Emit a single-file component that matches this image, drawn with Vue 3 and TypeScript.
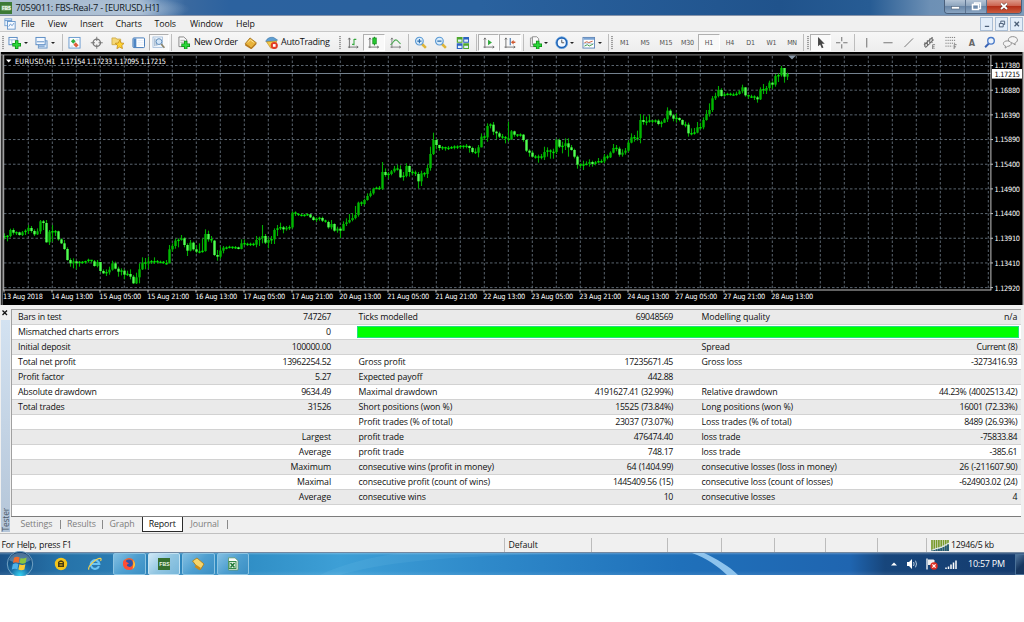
<script setup lang="ts">
type Bar = [number, number, number]
interface Segment { base: number; bars: Bar[] }
interface Tool { id: string; w: number; kind?: 'sep' | 'grip' | 'text' | 'label' | 'drop'; on?: boolean }

// Bars are [close, high, low] in thirds of a pixel below the segment's base line.
const segments: Segment[] = [
  { base: 200, bars: [
    [112,100,118],[108,105,124],[90,86,112],[98,85,104],[97,94,105],[105,95,107],[97,93,108],[93,88,105],[84,75,102],[93,78,98],
    [103,88,108],[94,85,105],[64,60,102],[69,60,90],[127,60,128],[95,90,135],[94,75,125],[94,90,108],[118,92,122],[130,115,132],
    [147,120,150],[180,142,182],[190,175,200],[184,175,205],[190,183,208],[186,183,200],[188,183,192],[184,182,191],[180,176,188],[184,180,188],
    [198,180,200],[186,180,202],[213,186,216],[220,208,222],[217,208,228],[209,200,224],[190,182,212],[206,185,208],[215,200,230],[212,205,226],
    [224,208,238],[222,212,228],[230,208,238],[250,225,252],[232,218,252],[208,190,250],[188,172,210],[190,174,208],[184,170,206],[188,180,192],
    [184,172,192],[186,180,190],[186,182,190],[190,183,192],[190,180,194],[148,135,190],[138,130,155],[122,116,146],[120,115,142],[115,105,122],
    [135,112,142],[152,130,168],[128,120,154],[148,125,152],[155,135,160],[155,130,160],[153,115,158],[102,88,155],[118,92,125],[122,108,128],
    [165,120,168],[170,150,182],[152,140,176],[143,138,160],[145,139,148],[141,137,145],[144,139,147],[142,138,147],[147,140,148],[130,118,148],
    [132,118,136],[135,128,138],[132,128,138],[134,128,138],[120,108,142],[115,110,138]] },
  { base: 150, bars: [
    [258,225,280],[278,252,282],[270,262,295],[268,258,282],[240,235,282],[236,225,258],[232,218,240],[238,228,250],[233,228,242],[232,226,240],
    [188,184,236],[192,184,198],[195,190,198],[195,191,199],[197,192,200],[193,190,198],[202,192,204],[210,198,212],[207,202,216],[204,200,212],
    [212,200,216],[216,209,218],[232,212,236],[222,210,238],[242,220,245],[236,230,248],[242,230,264],[222,214,242],[217,205,228],[210,192,220],
    [204,190,214],[195,168,208],[158,155,200],[162,154,168],[150,146,166],[138,130,152],[130,122,142],[116,113,134],[114,110,118],[116,108,120],
    [66,36,120],[75,55,80],[72,66,86],[64,60,76],[56,48,68],[58,44,62],[82,46,84],[78,66,92],[48,40,82],[66,46,80],
    [68,60,75],[72,62,78],[94,66,116],[70,62,108],[72,66,80],[54,44,84],[12,-10,62],[-30,-52,15],[-15,-34,-2],[-6,-16,2],
    [-8,-12,0],[-4,-10,2],[-6,-12,0],[-8,-12,-3],[-10,-14,-2],[-8,-14,-3],[-12,-15,-4],[-9,-14,-4],[-12,-18,-5],[-6,-14,8],
    [6,-10,10],[8,-5,12],[-8,-15,22]] },
  { base: 90, bars: [
    [140,130,172],[142,135,150],[108,100,155],[104,100,115],[125,96,135],[130,122,148],[140,125,144],[142,132,148],[146,138,160],[148,95,155],
    [124,120,150],[134,122,140],[138,132,141],[134,130,140],[150,132,155],[182,148,186],[188,178,200],[200,182,202],[202,195,206],[200,194,218],
    [202,192,208],[186,170,210],[182,172,200],[186,178,206],[186,176,206],[150,146,192],[170,146,174],[168,155,190],[160,145,180],[172,145,200],
    [180,165,182],[200,176,205],[224,196,236],[228,220,234],[224,212,240],[222,214,226],[216,208,230],[222,212,230],[218,213,226],[214,204,220],
    [214,208,219],[200,192,220],[202,194,208],[188,184,204],[174,162,190],[176,165,184],[194,170,200],[188,178,200],[182,174,194],[158,150,186],
    [142,130,160],[146,135,155],[144,122,152],[90,72,160],[96,75,104],[95,80,106],[92,74,98],[96,90,100],[92,88,98],[102,88,106],
    [98,92,112],[88,84,98],[62,52,96],[76,58,80],[86,72,94],[84,70,98],[90,82,94],[104,88,106],[104,95,112],[130,98,140],
    [130,115,136],[128,114,134],[112,96,130],[112,98,118],[90,82,118],[72,60,92],[60,40,80],[25,18,66],[18,8,30],[0,-12,22],
    [18,-5,20],[14,8,20],[12,8,16],[14,8,17],[14,8,17],[12,5,17],[4,0,14]] },
  { base: 50, bars: [
    [112,104,130],[136,112,140],[140,134,146],[140,134,144],[142,136,150],[148,138,158],[118,112,150],[122,102,132],[114,108,132],[98,92,122],
    [104,94,116],[78,72,110],[76,70,96],[54,48,80],[80,54,98],[72,68,90]] },
]

const bars = segments.flatMap(s => s.bars.map(b => b.map(v => s.base + v / 3)))
const candles = bars.map(([c, h, l], i) => {
  const o = i ? bars[i - 1][0] : c - 1
  const top = Math.min(o, c)
  const size = Math.abs(c - o)
  return {
    x: 4.5 + i * 3,
    h: Math.min(h, top), l: Math.max(l, top + size),
    y: size < 1.4 ? top - 0.3 : top,
    size: Math.max(size, 1.4),
    cls: size < 1.4 ? 'flat' : c > o ? 'bear' : 'bull',
  }
})

const dates = ['13 Aug 2018', '14 Aug 13:00', '15 Aug 05:00', '15 Aug 21:00', '16 Aug 13:00', '17 Aug 05:00', '17 Aug 21:00', '20 Aug 13:00',
  '21 Aug 05:00', '21 Aug 21:00', '22 Aug 13:00', '23 Aug 05:00', '23 Aug 21:00', '24 Aug 13:00', '27 Aug 05:00', '27 Aug 21:00', '28 Aug 13:00']
const prices = ['1.17380', '1.16880', '1.16390', '1.15890', '1.15400', '1.14900', '1.14400', '1.13910', '1.13410', '1.12920']
const priceY = (i: number) => 65.5 + i * 24.68

const menu = [['File', 27], ['View', 32], ['Insert', 35.5], ['Charts', 39], ['Tools', 35.5], ['Window', 46], ['Help', 30]] as [string, number][]

const tools: Tool[] = [
  { id: '', w: 6, kind: 'grip' }, { id: 'newchart', w: 24, kind: 'drop' }, { id: 'profiles', w: 30, kind: 'drop' }, { id: '', w: 4, kind: 'sep' },
  { id: 'market', w: 22 }, { id: 'target', w: 21 }, { id: 'folder', w: 21 }, { id: 'terminal', w: 21 }, { id: 'tester', w: 20, on: true },
  { id: '', w: 5, kind: 'sep' }, { id: 'order', w: 20 }, { id: 'New Order', w: 46, kind: 'text' }, { id: 'book', w: 22 }, { id: 'auto', w: 19 },
  { id: 'AutoTrading', w: 56, kind: 'text' }, { id: '', w: 6, kind: 'grip' },
  { id: 'bars', w: 20 }, { id: 'candle', w: 22, on: true }, { id: 'line', w: 21 }, { id: '', w: 5, kind: 'sep' },
  { id: 'zoomin', w: 19 }, { id: 'zoomout', w: 22 }, { id: 'tile', w: 22 }, { id: '', w: 4, kind: 'sep' },
  { id: 'scroll', w: 21, on: true }, { id: 'shift', w: 22, on: true }, { id: '', w: 5, kind: 'sep' },
  { id: 'indicator', w: 25, kind: 'drop' }, { id: 'clock', w: 27, kind: 'drop' }, { id: 'template', w: 28, kind: 'drop' },
  { id: '', w: 4, kind: 'sep' }, { id: '', w: 4, kind: 'grip' },
  { id: 'M1', w: 21, kind: 'label' }, { id: 'M5', w: 20, kind: 'label' }, { id: 'M15', w: 22, kind: 'label' }, { id: 'M30', w: 21, kind: 'label' },
  { id: 'H1', w: 22, kind: 'label', on: true }, { id: 'H4', w: 20, kind: 'label' }, { id: 'D1', w: 21, kind: 'label' }, { id: 'W1', w: 21, kind: 'label' },
  { id: 'MN', w: 20, kind: 'label' }, { id: '', w: 3, kind: 'sep' }, { id: '', w: 5, kind: 'grip' },
  { id: 'cursor', w: 21, on: true }, { id: 'cross', w: 21 }, { id: '', w: 5, kind: 'sep' },
  { id: 'vline', w: 20 }, { id: 'hline', w: 21 }, { id: 'trend', w: 22 }, { id: 'channel', w: 20 }, { id: 'fib', w: 21 },
  { id: 'letter', w: 22 }, { id: 'search', w: 13 }, { id: 'chat', w: 28 },
]

const rows: string[][] = [
  ['Bars in test', '747267', 'Ticks modelled', '69048569', 'Modelling quality', 'n/a'],
  ['Mismatched charts errors', '0', '', '', '', ''],
  ['Initial deposit', '100000.00', '', '', 'Spread', 'Current (8)'],
  ['Total net profit', '13962254.52', 'Gross profit', '17235671.45', 'Gross loss', '-3273416.93'],
  ['Profit factor', '5.27', 'Expected payoff', '442.88', '', ''],
  ['Absolute drawdown', '9634.49', 'Maximal drawdown', '4191627.41 (32.99%)', 'Relative drawdown', '44.23% (4002513.42)'],
  ['Total trades', '31526', 'Short positions (won %)', '15525 (73.84%)', 'Long positions (won %)', '16001 (72.33%)'],
  ['', '', 'Profit trades (% of total)', '23037 (73.07%)', 'Loss trades (% of total)', '8489 (26.93%)'],
  ['', 'Largest', 'profit trade', '476474.40', 'loss trade', '-75833.84'],
  ['', 'Average', 'profit trade', '748.17', 'loss trade', '-385.61'],
  ['', 'Maximum', 'consecutive wins (profit in money)', '64 (1404.99)', 'consecutive losses (loss in money)', '26 (-211607.90)'],
  ['', 'Maximal', 'consecutive profit (count of wins)', '1445409.56 (15)', 'consecutive loss (count of losses)', '-624903.02 (24)'],
  ['', 'Average', 'consecutive wins', '10', 'consecutive losses', '4'],
]
const isNumber = (s: string) => /\d/.test(s)
</script>

<template>
  <svg class="defs" width="0" height="0">
    <defs>
      <symbol id="newchart" viewBox="0 0 14 14">
        <rect x="1" y="1.5" width="8.5" height="7.5" fill="#fff" stroke="#5b8cc4" /><path d="M1 4h8M4 4v5" stroke="#8bb0da" stroke-width=".8" />
        <path d="M9 4.5v9M4.5 9h9" stroke="#0a8a12" stroke-width="3.6" /><path d="M9 5.3v7.4M5.3 9h7.4" stroke="#2bd93a" stroke-width="2" />
      </symbol>
      <symbol id="profiles" viewBox="0 0 14 14">
        <rect x="3.5" y="5" width="9" height="7.5" fill="#dbe9f8" stroke="#6d98c8" /><rect x="1" y="1.5" width="9.5" height="7.5" fill="#f4f9ff" stroke="#5b8cc4" />
        <path d="M2 6h7.5M4 10.5h6" stroke="#5b8cc4" />
      </symbol>
      <symbol id="market" viewBox="0 0 14 14">
        <rect x="1" y="1.5" width="11.5" height="11" fill="#fbfdff" stroke="#6a9bd0" /><path d="M3 5.5 5.5 3 8 5.5 5.5 8z" fill="#2fae3e" /><path d="M5.5 9 8 6.5 11 9.5 8.5 12z" fill="#e0603a" />
        <path d="M8 4h3M2.7 10.5h2.5" stroke="#bccfe6" stroke-width=".8" />
      </symbol>
      <symbol id="target" viewBox="0 0 14 14">
        <circle cx="7" cy="7" r="3.8" fill="none" stroke="#777" stroke-width="1.4" /><path d="M7 .8v4.4M7 8.8v4.4M.8 7h4.4M8.8 7h4.4" stroke="#777" />
      </symbol>
      <symbol id="folder" viewBox="0 0 14 14">
        <path d="M1 2h4l1 1.2h4V9H1z" fill="#f5d878" stroke="#c9a23c" stroke-width=".8" />
        <path d="M9 4.2l1.4 3 3.2.4-2.4 2.2.7 3.3L9 11.5l-2.9 1.6.7-3.3-2.4-2.2 3.2-.4z" fill="#ffd332" stroke="#c08a18" stroke-width=".8" />
      </symbol>
      <symbol id="terminal" viewBox="0 0 14 14">
        <rect x="1" y="2" width="12" height="10" rx="1" fill="#fff" stroke="#3f78b8" /><path d="M1.5 2.5h3v9h-3z" fill="#4f86c4" /><path d="M6 4.8h6M6 7h6M6 9.2h6" stroke="#d7e4f4" stroke-width=".7" />
      </symbol>
      <symbol id="tester" viewBox="0 0 14 14">
        <rect x="1" y="1" width="10" height="11" fill="#eef5fc" stroke="#9db9d8" stroke-width=".8" /><path d="M3 2.5v8M5 4v6" stroke="#6c87a8" stroke-width=".8" />
        <circle cx="7.2" cy="5.8" r="3" fill="#d3e6f8" stroke="#5d8ab8" /><path d="M9.5 8.2l3.4 4" stroke="#8d8468" stroke-width="1.7" />
      </symbol>
      <symbol id="order" viewBox="0 0 14 14">
        <path d="M2 1h5l3 2.7V11H2z" fill="#fafafa" stroke="#7a7a7a" stroke-width=".9" /><path d="M3.5 4.5H8M3.5 6.5H7" stroke="#999" stroke-width=".8" />
        <path d="M9 5v9M4.5 9.5h9" stroke="#0a8a12" stroke-width="3.6" /><path d="M9 5.8v7.4M5.3 9.5h7.4" stroke="#2bd93a" stroke-width="2" />
      </symbol>
      <symbol id="book" viewBox="0 0 14 14">
        <path d="M1.2 8 6.2 2l6.6 5-5.2 5.6z" fill="#e8b33b" stroke="#9c6a12" stroke-width=".8" /><path d="M1.2 8v1.8l6.4 4 5.2-5.2V7l-5.2 5.2z" fill="#b9791a" /><path d="M4 6.8 6.5 4l3.6 2.7" fill="none" stroke="#ffe596" />
      </symbol>
      <symbol id="auto" viewBox="0 0 14 14">
        <path d="M.8 5.6C2 2.2 5.5.8 9 1.6l4 2.6L8 6.5z" fill="#5f9fd2" stroke="#356fa4" stroke-width=".6" /><path d="M1.5 6 12 5.2l-1 5.5-5 2z" fill="#f4c84a" stroke="#b58618" stroke-width=".6" />
        <circle cx="9.6" cy="9.8" r="3.7" fill="#e13a25" /><rect x="8.2" y="8.4" width="2.8" height="2.8" fill="#fff" />
      </symbol>
      <symbol id="bars" viewBox="0 0 14 14">
        <path d="M3.5 2v10.5M2 11.5h10.5M2.4 3.6 3.5 2l1.1 1.6M11 10.4l1.6 1.1L11 12.6" fill="none" stroke="#666" stroke-width=".9" /><path d="M8.3 3v6.5M8.3 3.5h2.4M6.3 8.7h2" stroke="#35a83d" stroke-width="1.1" />
      </symbol>
      <symbol id="candle" viewBox="0 0 14 14">
        <path d="M3 2v10.5M1.5 11.5H12M1.9 3.6 3 2l1.1 1.6M10.5 10.4l1.6 1.1-1.6 1.1" fill="none" stroke="#666" stroke-width=".9" /><path d="M7.7.8v9" stroke="#167d1c" /><rect x="6" y="2" width="3.6" height="6.2" fill="#25c830" stroke="#12851a" stroke-width=".7" />
      </symbol>
      <symbol id="line" viewBox="0 0 14 14">
        <path d="M3 2v10.5M1.5 11.5H12M1.9 3.6 3 2l1.1 1.6M10.5 10.4l1.6 1.1-1.6 1.1" fill="none" stroke="#777" stroke-width=".9" /><path d="M1.5 9C4 8 5 4 7 4s2.5 2.5 5 4" fill="none" stroke="#4aa850" stroke-width="1.1" />
      </symbol>
      <symbol id="zoomin" viewBox="0 0 14 14">
        <path d="M8.3 8.3l4 4" stroke="#dfb537" stroke-width="2.6" /><circle cx="5.6" cy="5.3" r="4" fill="#d8ecfb" stroke="#5c9ad4" stroke-width="1.2" /><path d="M3.4 5.3h4.4M5.6 3.1v4.4" stroke="#2b6cae" stroke-width="1.1" />
      </symbol>
      <symbol id="zoomout" viewBox="0 0 14 14">
        <path d="M8.3 8.3l4 4" stroke="#dfb537" stroke-width="2.6" /><circle cx="5.6" cy="5.3" r="4" fill="#d8ecfb" stroke="#5c9ad4" stroke-width="1.2" /><path d="M3.4 5.3h4.4" stroke="#2b6cae" stroke-width="1.1" />
      </symbol>
      <symbol id="tile" viewBox="0 0 14 14">
        <path d="M.8 1h6v6h-6zM7.5 7.5h6v6h-6z" fill="#4ea82c" /><path d="M7.5 1h6v6h-6zM.8 7.5h6v6h-6z" fill="#2c62c0" /><path d="M2 3.6h3.8V6H2zM8.5 3.6h4V6h-4zM2 10h3.8v2.4H2zM8.5 10h4v2.4h-4z" fill="#e4f1fb" />
      </symbol>
      <symbol id="scroll" viewBox="0 0 14 14">
        <path d="M3 2v10.5M1.5 11.5H12.5M1.9 3.6 3 2l1.1 1.6M11 10.4l1.6 1.1L11 12.6" fill="none" stroke="#666" stroke-width=".9" /><path d="M6.3 4v5.6l4-2.8z" fill="#2fa83a" />
      </symbol>
      <symbol id="shift" viewBox="0 0 14 14">
        <path d="M3 2v10.5M1.5 11.5H12.5M1.9 3.6 3 2l1.1 1.6M11 10.4l1.6 1.1L11 12.6" fill="none" stroke="#666" stroke-width=".9" /><path d="M7.5 2v7.5" stroke="#3f70aa" stroke-width="1.1" /><path d="M8.2 6.5 11 4.2v1.6h1.8v1.4H11v1.6z" fill="#d05a32" />
      </symbol>
      <symbol id="indicator" viewBox="0 0 14 14">
        <path d="M1.5 2h6v9h-6z" fill="#eee" stroke="#888" stroke-width=".8" /><path d="M3.5.8h4.5l2 2V9h-6.5z" fill="#fafafa" stroke="#777" stroke-width=".8" />
        <path d="M9 5v9M4.5 9.5h9" stroke="#0a8a12" stroke-width="3.6" /><path d="M9 5.8v7.4M5.3 9.5h7.4" stroke="#2bd93a" stroke-width="2" />
      </symbol>
      <symbol id="clock" viewBox="0 0 14 14">
        <circle cx="7" cy="7" r="5.2" fill="#f3f9ff" stroke="#1c62b6" stroke-width="2" /><circle cx="7" cy="7" r="6.2" fill="none" stroke="#6ea9e2" stroke-width=".8" /><path d="M7 3.8V7h2.5" fill="none" stroke="#444" stroke-width=".9" />
      </symbol>
      <symbol id="template" viewBox="0 0 14 14">
        <rect x="1" y="1.5" width="12" height="11" fill="#fff" stroke="#6288b8" /><path d="M1.5 2h11v2h-11z" fill="#7aa5d6" /><path d="M2.5 7l2.5-1 2 .8 4-1.4" fill="none" stroke="#c4573a" /><path d="M2.5 10.5 5.5 9l2 1.4 4-2" fill="none" stroke="#3d9b48" /><path d="M1 8h12" stroke="#88a8cc" stroke-width=".6" />
      </symbol>
      <symbol id="cursor" viewBox="0 0 14 14"><path d="M4.2 1v9.7l2.2-2 1.7 3.9 1.7-.8-1.7-3.7h3z" fill="#444" /></symbol>
      <symbol id="cross" viewBox="0 0 14 14"><path d="M7 1v4.5M7 8.5V13M1 7h4.5M8.5 7H13" stroke="#777" stroke-width="1.1" /></symbol>
      <symbol id="vline" viewBox="0 0 14 14"><path d="M7 2v10" stroke="#777" stroke-width="1.1" /></symbol>
      <symbol id="hline" viewBox="0 0 14 14"><path d="M2.5 7h9.5" stroke="#777" stroke-width="1.1" /></symbol>
      <symbol id="trend" viewBox="0 0 14 14"><path d="M2.5 11.5l9-9" stroke="#777" /></symbol>
      <symbol id="channel" viewBox="0 0 14 14">
        <path d="M1 9.5 9 2M2.5 12 11 3.8M2 6.5v5M4.5 4.5v6M7 2.5v6M9.5 1v6" stroke="#6a6a6a" stroke-width="1.1" /><path d="M10 9v4.5h2.5M10 9h2.5M10 11.2h2" fill="none" stroke="#666" stroke-width=".8" />
      </symbol>
      <symbol id="fib" viewBox="0 0 14 14">
        <path d="M1.5 1.5h11M1.5 4.5h11M1.5 7.5h11M1.5 10.5h7" stroke="#777" stroke-dasharray="1.2 1" /><path d="M10.5 9v4.5M10.5 9h2.6M10.5 11.2h2" fill="none" stroke="#666" stroke-width=".8" />
      </symbol>
      <symbol id="search" viewBox="0 0 14 14"><path d="M6 7.8 2.2 11.7" stroke="#3a64b4" stroke-width="2" /><circle cx="8.3" cy="5" r="3.4" fill="#eaf2fb" stroke="#4a7ac8" stroke-width="1.4" /></symbol>
      <symbol id="chat" viewBox="0 0 14 14">
        <path d="M9 1.5c2.5 0 4.5 1.3 4.5 3S12 7.3 11 7.5l.4 1.8-2.4-1.7C6.700 7.5 5 6.2 5 4.5s1.7-3 4-3z" fill="#f4f4f4" stroke="#8c8c8c" stroke-width=".9" />
        <path d="M4 5.5c2.2 0 3.7 1 3.7 2.5S6 10.5 4.3 10.6L2 12.2l.3-2C1 9.9.4 9 .4 8 .4 6.5 2 5.5 4 5.5z" fill="#f4f4f4" stroke="#8c8c8c" stroke-width=".9" />
      </symbol>
    </defs>
  </svg>

  <div class="screen">
    <header class="title">
      <svg class="fbs" viewBox="0 0 12 12"><rect width="12" height="12" fill="#3c7a35" /><rect x="1.5" y="3.5" width="9" height="5" fill="#86b37c" /><text x="2" y="8" font-size="4.5" font-weight="700" fill="#fff" font-family="Liberation Sans">FBS</text></svg>
      <span class="caption">7059011: FBS-Real-7 - [EURUSD,H1]</span>
      <div class="winbtns">
        <span class="wb"><svg viewBox="0 0 20 13"><rect x="6.5" y="6.5" width="8" height="2.5" fill="#fff" stroke="#53657c" stroke-width=".6" /></svg></span>
        <span class="wb"><svg viewBox="0 0 20 13"><path d="M8.5 5V3h6v5.5h-2" fill="none" stroke="#fff" stroke-width="1.3" /><rect x="6.5" y="4.5" width="6" height="5" fill="none" stroke="#fff" stroke-width="1.5" /></svg></span>
        <span class="wb close"><svg viewBox="0 0 20 13"><path d="M7 3.5l6 5.5M13 3.5L7 9" stroke="#553029" stroke-width="3" /><path d="M7 3.5l6 5.5M13 3.5L7 9" stroke="#fff" stroke-width="1.9" /></svg></span>
      </div>
    </header>

    <nav class="menu">
      <svg class="doc" viewBox="0 0 14 14"><rect x="1" y="1" width="8" height="8" fill="#e9f3fd" stroke="#72a0d2" /><rect x="4" y="4" width="9" height="9" fill="#f4f9ff" stroke="#5d90c8" /><path d="M5.5 10l2-3 2 2 2-3M1 3h8" fill="none" stroke="#5d90c8" /></svg>
      <span v-for="[m, w] in menu" :key="m" :style="{ width: w + 'px' }">{{ m }}</span>
      <div class="mdi">
        <i><svg viewBox="0 0 12 12"><path d="M4 8.5h4.5" stroke="#4d6078" stroke-width="1.3" /></svg></i>
        <i><svg viewBox="0 0 12 12"><path d="M5 5V3h4v3.5H7.5M3.5 5.5h4V9h-4z" fill="none" stroke="#4d6078" /></svg></i>
        <i><svg viewBox="0 0 12 12"><path d="M3.7 3.7l4.6 4.6M8.3 3.7L3.7 8.3" stroke="#4d6078" stroke-width="1.3" /></svg></i>
      </div>
    </nav>

    <div class="toolbar">
      <div v-for="(t, i) in tools" :key="i" class="tool" :class="[t.kind, { on: t.on, 'letter-tool': t.id === 'letter' }]" :style="{ width: t.w + 'px' }">
        <template v-if="t.kind === 'text' || t.kind === 'label'">{{ t.id }}</template>
        <template v-else-if="t.id === 'letter'">A</template>
        <template v-else-if="t.kind !== 'sep' && t.kind !== 'grip'">
          <svg class="ico" :class="{ wide: t.id === 'chat' }"><use :href="'#' + t.id" /></svg>
          <b v-if="t.kind === 'drop'" class="arrow"></b>
        </template>
      </div>
    </div>

    <svg class="chart" width="1024" height="253" viewBox="0 52 1024 253">
      <rect x="0" y="52" width="1024" height="253" fill="#b5b5b5" />
      <rect x="1" y="52" width="1021.5" height="253" fill="#000" />
      <path d="M1 54.8H1022.5M2.2 55V305" stroke="#6d6d6d" stroke-width="1.3" />
      <g class="grid">
        <path v-for="(p, i) in prices" :key="p" :d="`M4 ${priceY(i)}H991`" />
        <path v-for="k in 41" :key="k" :d="`M${4.3 + k * 24} 56V290`" />
      </g>
      <path d="M4 73.5H991" stroke="#74828f" stroke-width="1" />
      <g v-for="(c, i) in candles" :key="i" :class="c.cls">
        <path class="wick" :d="`M${c.x} ${c.h}V${c.l}`" />
        <rect :x="c.x - 1.2" :y="c.y" width="2.4" :height="c.size" />
      </g>
      <path d="M3.7 55V290.2M3 290H991.3M990.9 55V290.2" fill="none" stroke="#c4c4c4" stroke-width="1" />
      <path d="M788 55.5h8l-4 4z" fill="#8796a6" />
      <g class="axis">
        <template v-for="(d, i) in dates" :key="d">
          <path :d="`M${4 + i * 48} 290v2.5`" stroke="#c4c4c4" />
          <text :x="3 + i * 48 + (i ? 0.3 : 0)" y="299.3" :textLength="i ? 42 : 40">{{ d }}</text>
        </template>
        <template v-for="(p, i) in prices" :key="p">
          <path :d="`M991 ${priceY(i)}h2`" stroke="#c4c4c4" />
          <text x="994.5" :y="priceY(i) + 2.9" textLength="25.5">{{ p }}</text>
        </template>
        <rect x="992" y="69" width="30" height="9.6" fill="#fff" />
        <text class="last" x="994.5" y="76.7" textLength="25.5">1.17215</text>
        <path d="M6 59.5h5.4L8.7 62.6z" fill="#fff" />
        <text x="15" y="63.6" textLength="40.5">EURUSD,H1</text>
        <text x="60" y="63.6" textLength="106">1.17154 1.17233 1.17095 1.17215</text>
      </g>
    </svg>

    <section class="tester">
      <aside>
        <svg class="x" viewBox="0 0 8 8"><path d="M1.5 1.5l4.5 4.5M6 1.5L1.5 6" stroke="#111" stroke-width="1.3" /></svg>
        <div class="strip"><span>Tester</span></div>
      </aside>
      <div class="pane">
        <div class="table">
          <div v-for="(r, i) in rows" :key="i" class="row">
            <template v-if="i !== 1"><span v-for="(c, j) in r" :key="j" :class="{ num: isNumber(c) }">{{ c }}</span></template>
            <template v-else><span>{{ r[0] }}</span><span>{{ r[1] }}</span><div class="quality"></div></template>
          </div>
        </div>
        <div class="tabs">
          <span class="settings">Settings</span><em></em><span class="results">Results</span><em></em><span class="graph">Graph</span><span class="active">Report</span><span class="journal">Journal</span><em></em>
        </div>
      </div>
    </section>

    <footer class="status">
      <div class="s0">For Help, press F1</div><div class="s1">Default</div><div class="s2"></div><div class="s3"></div><div class="s4"></div><div class="s5"></div><div class="s6"></div><div class="s7"></div>
      <div class="s8">
        <svg width="18" height="11" viewBox="0 0 18 11"><path d="M1 0v11M3.3 0v11M5.6 0v11M7.9 0v11M10.2 0v11M12.5 0v11M14.8 0v11M17 0v11" stroke="#789a2c" stroke-width="1.7" /><path d="M0 10 6 7.7l4-1L18 2.5v1.6L10 8.200 6 9.200 0 11z" fill="#dfe8ea" /><path d="M1 10.500v.5M3.3 10v1M5.6 9.3V11M7.9 8.700V11M10.2 8V11M12.5 7V11M14.8 5.700V11M17 4.500V11" stroke="#255878" stroke-width="1.9" /></svg>
        12946/5 kb
      </div>
    </footer>

    <div class="taskbar">
      <svg class="streak" viewBox="0 0 1024 22" preserveAspectRatio="none">
        <path d="M340 22C400 4 500 2 600 0H400C370 4 340 12 320 22z" fill="#8fd4f4" opacity=".1" />
        <path d="M692 0h12c13 6 25 13 34 22h-11C718 13 706 5 692 0z" fill="#a9d8fa" opacity=".8" />
      </svg>
      <svg class="orb" viewBox="0 0 28 25">
        <defs><radialGradient id="og" cx=".5" cy=".95" r=".9"><stop offset="0" stop-color="#35d5f5" /><stop offset=".4" stop-color="#1c6fa6" /><stop offset="1" stop-color="#0f3d6e" /></radialGradient></defs>
        <circle cx="14" cy="13" r="12.7" fill="url(#og)" stroke="#86b4d0" stroke-width=".8" /><path d="M3 9a12 12 0 0 1 22 0c-6 4-16 4-22 0z" fill="#fff" opacity=".25" />
        <path d="M8 6.7c2-1.2 3.8-1.2 5.6-.2l-1 5.4C10.9 10.9 9 10.9 7 12.1z" fill="#ee6b2d" /><path d="M14.6 6.9c2 .9 4 .8 6-.3l-1 5.4c-2 1-4 1-6 0z" fill="#8cc63f" />
        <path d="M6.8 13.2c2-1.2 3.8-1.2 5.6-.2l-1 5.3c-1.8-1-3.6-.8-5.6.3z" fill="#4fb2ea" /><path d="M13.4 13.3c2 1 4 .9 6-.1l-1 5.4c-2 1-4 1-6 0z" fill="#fccb35" />
      </svg>
      <svg class="t-gom" viewBox="0 0 14 14"><circle cx="7" cy="7" r="6.2" fill="#f4c51c" /><path d="M4 5q3-3.5 6 0v5h-6z" fill="#4a3c10" /><path d="M5.5 5.5h3M5.5 8h3" stroke="#f4c51c" stroke-width="1" /></svg>
      <svg class="t-ie" viewBox="0 0 14 14"><path d="M11 9.2A4.3 4.3 0 1 1 11.3 7H4" fill="none" stroke="#6cc4f4" stroke-width="2.2" /><path d="M1 12.7C-1 10 8 1 12.5 1.3c1 .3.5 2 0 2.7" fill="none" stroke="#f3d250" stroke-width="1.2" /></svg>
      <span class="tb"><svg viewBox="0 0 14 14"><circle cx="7" cy="7" r="6" fill="#f2622c" /><circle cx="7" cy="6.3" r="3.8" fill="#3152a8" /><path d="M1 6c0 9 12 9 12 1-1.5 3-4 4-7 2.5C4 8.5 5 7 7 7 5 4 3 5 2.5 2.5 1.5 3.5 1 4.5 1 6z" fill="#ff4c36" /><path d="M11 3c3 3 2.500 7-.5 9 1-3 1-6 .5-9z" fill="#ffca36" /></svg></span>
      <span class="tb lit"><svg viewBox="0 0 14 14"><rect x="1" y="1" width="12" height="12" fill="#36702f" /><text x="2.3" y="9.2" font-size="5.2" font-weight="700" fill="#eaf5e6" font-family="Liberation Sans">FBS</text></svg></span>
      <span class="tb"><svg viewBox="0 0 14 14"><path d="M1.5 4 6 1l7 6-3.5 5.5L5.500 9z" fill="#f7d56c" stroke="#a97912" stroke-width=".8" /><path d="M3.5 10 5.5 8l4.5 3-1.5 2.3z" fill="#c98b1b" /></svg></span>
      <span class="tb"><svg viewBox="0 0 14 14"><path d="M2.5.8h6.5l3 3V13H2.5z" fill="#fafdfa" stroke="#5b9666" stroke-width=".8" /><rect x="3" y="4.5" width="7" height="7" fill="#e4f3e4" stroke="#35894a" /><path d="M4.5 6l4 4.5M8.5 6l-4 4.5" stroke="#23783a" stroke-width="1.5" /></svg></span>
      <div class="tray">
        <svg width="6" height="4" viewBox="0 0 6 4"><path d="M0 3.5h6L3 .5z" fill="#fff" /></svg>
        <svg width="13" height="12" viewBox="0 0 13 12"><path d="M1 4h2l3-3v10L3 8H1z" fill="#fff" /><path d="M7.5 4q1.2 2 0 4M9.5 2.7q2 3.3 0 6.6" fill="none" stroke="#c7d8e8" stroke-width=".9" /></svg>
        <svg width="12" height="12" viewBox="0 0 12 12"><path d="M1 .5v11" stroke="#fff" stroke-width="1.3" /><path d="M2 1.5h5.5l1 1V7H2z" fill="#eee" /><circle cx="8" cy="8" r="3.7" fill="#dc2c20" /><path d="M6.4 6.4l3.2 3.2M9.6 6.4 6.4 9.6" stroke="#fff" stroke-width="1.2" /></svg>
        <svg width="12" height="11" viewBox="0 0 12 11"><path d="M1 8.5V10M3.5 7.5V10M6 5.5V10M8.5 3.5V10M11 1.5V10" stroke="#fff" stroke-width="1.5" /></svg>
        <span class="time">10:57 PM</span>
        <span class="peek"></span>
      </div>
    </div>
  </div>
</template>

<style>
body { background: #fff; overflow: hidden; }
</style>

<style scoped>
.defs { position: absolute; }
.screen { width: 1024px; height: 622px; display: flex; flex-direction: column; background: #fff; font: 8.8px/12px "Open Sans", "Noto Sans", sans-serif; color: #101010; overflow: hidden; white-space: nowrap; }
.screen svg { flex: none; }

.title { height: 16px; box-sizing: border-box; flex: none; display: flex; align-items: flex-start; border-bottom: 1.5px solid #8794aa; background: radial-gradient(ellipse 60px 12px at 130px 9px, #b9c9dacc, transparent), linear-gradient(90deg, #aabdcf 0, #a9bdd2 90px, #9fb6cf 140px, #6088b5 160px, #3a699f 185px, #2c629f 230px, #2a629f 480px, #20538c 780px, #275c94 870px, #6d90b5 930px, #7d9cbb 1024px); }
.fbs { width: 12px; height: 12px; margin-top: 2px; }
.caption { margin-left: 3.5px; margin-top: 1px; font-size: 9.3px; line-height: 13px; letter-spacing: -.27px; color: #101822; }
.winbtns { margin-left: auto; margin-right: 2px; display: flex; height: 13.5px; border: 1px solid #495f7b; border-top: 0; border-radius: 0 0 4px 4px; overflow: hidden; box-sizing: border-box; }
.wb { width: 20px; border-right: 1px solid #5c7390; background: linear-gradient(#b4c4d6, #8ea5be 45%, #6a87a8 50%, #8aa5c2); }
.wb svg { width: 20px; height: 13px; display: block; }
.wb.close { width: 34px; border: 0; background: linear-gradient(#dd9a8b, #cc6450 45%, #b32f19 50%, #cb5b3d); display: flex; justify-content: center; }

.menu { height: 15px; flex: none; display: flex; align-items: center; background: #f0f0f0; }
.doc { width: 12px; height: 12px; margin: 0 5px 0 4px; }
.menu span { letter-spacing: -.08px; flex: none; }
.mdi { margin-left: auto; display: flex; gap: 1.5px; margin-right: 1px; }
.mdi i { width: 11.5px; height: 12px; border: 1px solid #a9bdd4; background: #e2edf9; display: block; }
.mdi svg { width: 11.5px; height: 12px; display: block; }

.toolbar { height: 21px; flex: none; box-sizing: border-box; display: flex; background: linear-gradient(#f7f7f7, #ededed); border-top: 1px solid #c8c8c8; }
.tool { flex: none; box-sizing: border-box; height: 21px; display: flex; align-items: center; justify-content: center; }
.tool.on { height: 17px; margin-top: 2px; border: 1px solid #b0b0b0; border-right-color: #fff; border-bottom-color: #fff; background: #f9f9f9; }
.ico { width: 13.5px; height: 13.5px; display: block; }
.ico.wide { width: 17px; height: 15px; }
.drop { gap: 2px; }
.arrow { border: 2.3px solid transparent; border-top: 2.8px solid #222; border-bottom: 0; }
.sep::before { content: ""; width: 1px; height: 17px; background: #bdbdbd; }
.grip::before { content: ""; width: 2px; height: 14px; background: repeating-linear-gradient(#9f9f9f 0 1px, #e6e6e6 1px 2px); }
.text { justify-content: flex-start; font-size: 9px; letter-spacing: -.27px; padding-bottom: 1px; }
.label { font: 7px "DejaVu Sans Condensed", "DejaVu Sans", sans-serif; color: #505050; letter-spacing: -.2px; }
.letter-tool { font: bold 9px "DejaVu Sans Condensed", sans-serif; color: #666; }

.chart { display: block; }
.grid path { fill: none; stroke: #64707c; stroke-width: .9; stroke-dasharray: 2.5 2; }
.wick { stroke: #00ac00; stroke-width: 1.1; }
.bull rect { fill: #00b800; }
.bear rect { fill: #50ff50; }
.flat rect { fill: #00e400; }
.axis text { font: 7.3px "DejaVu Sans Condensed", "DejaVu Sans", sans-serif; fill: #fff; }
.axis text.last { fill: #000; }

.tester { height: 228px; flex: none; display: flex; background: #f0f0f0; }
aside { width: 11px; flex: none; display: flex; flex-direction: column; }
.x { width: 8px; height: 8px; margin: 4px 0 3px 1px; }
.strip { width: 9px; height: 212px; margin-left: 1px; background: linear-gradient(#d3e2f1, #b4c5d8); display: flex; align-items: flex-end; justify-content: center; }
.strip span { writing-mode: vertical-rl; transform: rotate(180deg); font-size: 8.5px; line-height: 9px; color: #4a5868; letter-spacing: -.2px; }
.pane { width: 1010px; flex: none; display: flex; flex-direction: column; }
.table { height: 207px; margin-top: 4px; border: solid #a0a0a0; border-width: 1px 0 0 1px; background: #fff; box-sizing: border-box; }
.row { display: grid; grid-template-columns: 170px 148.5px 170px 173px 172px 169.5px; height: 15px; box-sizing: border-box; border-bottom: 1px solid #d2d2d2; padding-left: 6px; line-height: 15px; letter-spacing: -.12px; }
.row:nth-child(odd) { background: #eaeaea; }
.row span:nth-child(even) { text-align: right; padding-right: 5.5px; }
.row span:nth-child(4) { padding-right: 6.5px; }
.row span:nth-child(6) { padding-right: 3.8px; }
.row .num:nth-child(even) { letter-spacing: -.38px; word-spacing: .7px; }
.row span:nth-child(3), .row span:nth-child(5) { padding-left: 22px; }
.row span:first-child { letter-spacing: -.2px; }
.quality { grid-column: 3 / 7; box-sizing: border-box; height: 12px; margin: 1px 2.5px 0 20.5px; background: #00ff00; border: 1px solid #20e080; }
.tabs { height: 17px; border-top: 1.5px solid #7c7c7c; display: flex; align-items: center; box-sizing: border-box; color: #7d7d7d; padding: 0 0 2px 9.5px; letter-spacing: -.1px; }
.tabs em { width: 1px; height: 9px; background: #8a8a8a; margin: 0 6.5px 0 7px; }
.tabs span { flex: none; }
.settings { width: 32px; }
.results { width: 28px; }
.graph { width: 24.5px; }
.journal { width: 29px; }
.tabs .active { background: #fff; color: #111; border: solid #2b2b2b; border-width: 0 1.5px 1.5px 1px; margin: 0 7.5px 0 7.5px; height: 15px; line-height: 14px; width: 41.5px; box-sizing: border-box; text-align: center; }

.status { height: 20px; flex: none; box-sizing: border-box; background: #f0f0f0; border-top: 1px solid #c0c0c0; border-bottom: 1px solid #7388a0; display: flex; align-items: center; letter-spacing: -.1px; }
.status > div { box-sizing: border-box; height: 14px; line-height: 14px; border-right: 1px solid #bcbcbc; margin-top: 4px; flex: none; }
.status .s0 { letter-spacing: -.27px; word-spacing: .5px; }
.s0 { width: 505px; padding-left: 1.5px; }
.s1 { width: 87px; padding-left: 3.5px; }
.s2 { width: 76px; }
.s3, .s4 { width: 53.5px; }
.s5 { width: 51px; }
.s6 { width: 52px; }
.s7 { width: 49px; }
.status .s8 { border: 0; display: flex; align-items: center; gap: 2px; padding-left: 4px; letter-spacing: -.28px; }

.taskbar { height: 22px; flex: none; position: relative; display: flex; align-items: center; background: linear-gradient(#ffffff40, transparent 2px, transparent 18px, #ffffff18), linear-gradient(90deg, #1b5288 0, #2672a8 60px, #2a7db4 120px, #2f8dc4 240px, #3d9fd6 340px, #2f8aca 480px, #1f70ba 680px, #1f65b0 850px, #17467c 885px, #143a6c 1024px); }
.streak { position: absolute; inset: 0; width: 1024px; height: 22px; }
.orb { width: 28px; height: 25px; margin: -2px 0 0 6px; position: relative; }
.t-gom { width: 14px; height: 14px; margin-left: 20px; position: relative; }
.t-ie { width: 14px; height: 14px; margin-left: 20px; margin-right: 11px; position: relative; }
.tb { width: 32.5px; height: 21.5px; box-sizing: border-box; margin-right: 2.1px; border: 1px solid #8cc4e2; border-radius: 2px; background: linear-gradient(135deg, #82bfe2, #4e9fd0 50%, #3b8fc4); display: flex; align-items: center; justify-content: center; position: relative; flex: none; }
.tb.lit { background: linear-gradient(135deg, #cfe8f6, #92c6e2 50%, #78b7da); border-color: #c2e2f2; }
.tb svg { width: 14px; height: 14px; }
.tray { margin-left: auto; display: flex; align-items: center; height: 22px; color: #fff; position: relative; }
.tray svg { margin-right: 7px; }
.tray svg:first-child { margin-right: 9px; }
.tray svg:nth-child(4) { margin-right: 6px; }
.time { margin-left: 5px; width: 47px; font-size: 9px; letter-spacing: -.25px; }
.peek { width: 9px; height: 21px; border: 1px solid #4a7198; border-right: 0; box-sizing: border-box; background: linear-gradient(135deg, #52779e, #16365f 60%); }
</style>
